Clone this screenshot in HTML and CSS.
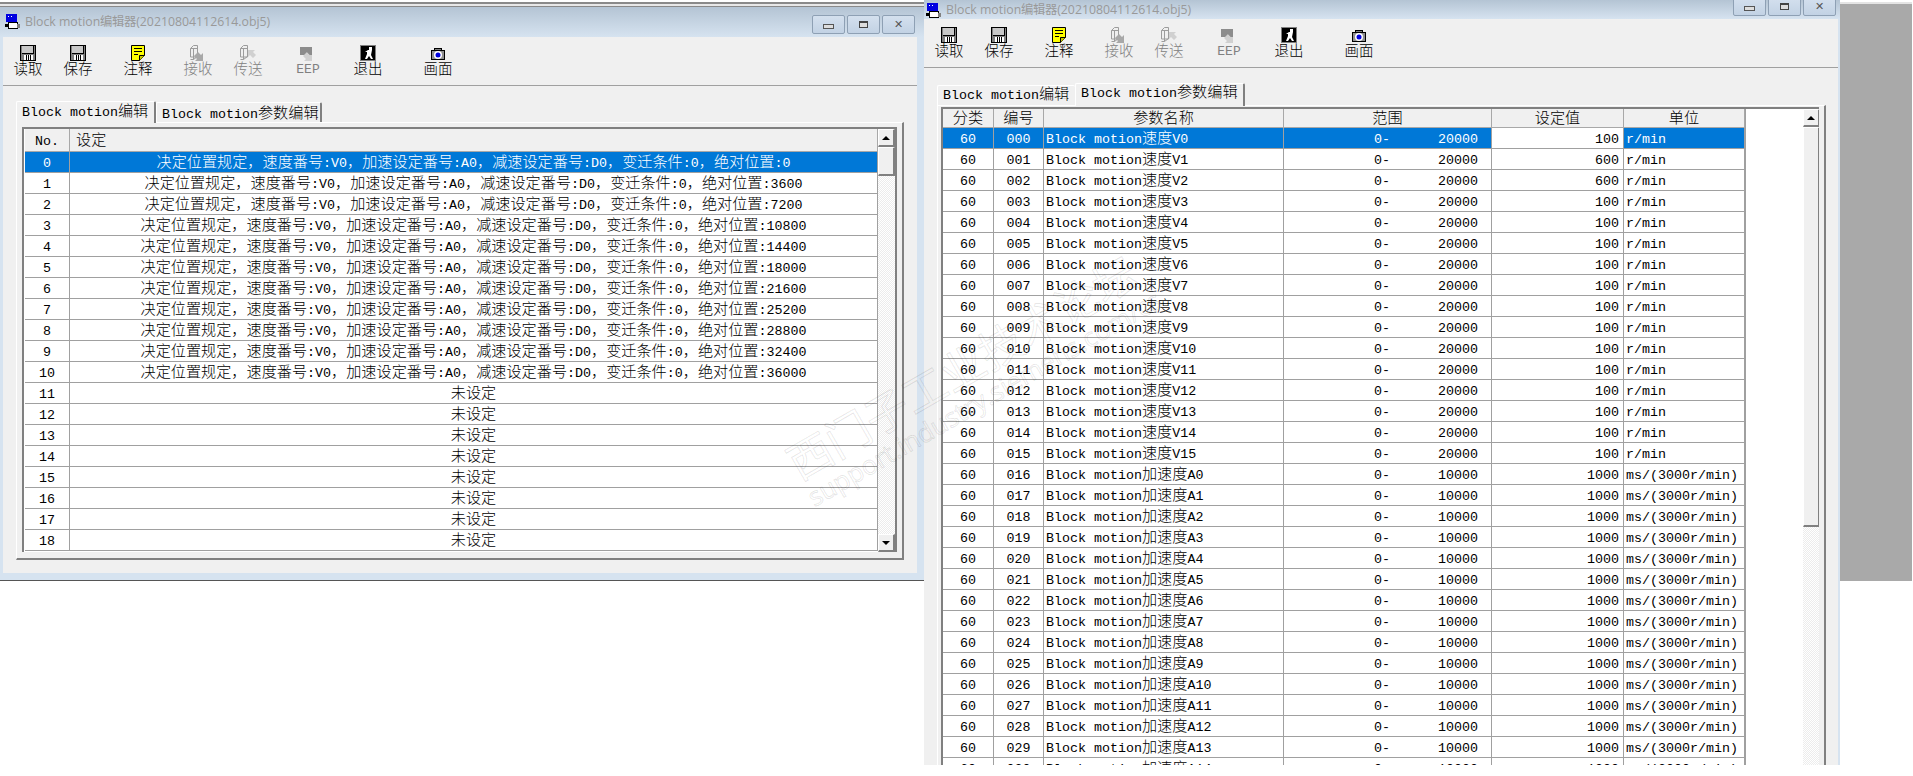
FILE: index.html
```html
<!DOCTYPE html>
<html lang="zh-CN">
<head>
    <meta charset="UTF-8">
    <title>Block motion编辑器</title>
    <link rel="stylesheet" href="styles.css">
</head>
<body>
    <svg class="icon-defs" width="0" height="0">
        <symbol id="i-app" viewBox="0 0 16 16">
            <rect x="1" y="0" width="11" height="8" fill="#0000e0"/>
            <rect x="3" y="2" width="1" height="1" fill="#fff"/>
            <rect x="6" y="2" width="1" height="1" fill="#fff"/>
            <rect x="3.500" y="8.500" width="9" height="6" fill="#fff" stroke="#000"/>
            <rect x="0" y="10" width="4" height="3" fill="#000"/>
            <rect x="12" y="10" width="3" height="4" fill="#808080"/>
        </symbol>
        <symbol id="i-disk" viewBox="0 0 16 16">
            <rect x="0.500" y="0.500" width="15" height="15" fill="#808080" stroke="#000"/>
            <rect x="2" y="1" width="12" height="7" fill="#c8c8c8"/>
            <path d="M2 8.500h12M13.500 1v7" stroke="#000"/>
            <rect x="4" y="10" width="9" height="5" fill="#fff"/>
            <path d="M6.500 10v5M8.500 10v5M10.500 10v5" stroke="#000"/>
        </symbol>
        <symbol id="i-note" viewBox="0 0 14 16">
            <path d="M0.500 0.500h13v10l-5 5h-8z" fill="#ff0" stroke="#000"/>
            <path d="M8.500 15.500v-5h5" fill="#c8c800" stroke="#000"/>
            <path d="M3 3.500h8M3 6.500h8M3 9.500h4" stroke="#000"/>
        </symbol>
        <symbol id="i-recv" viewBox="0 0 16 16">
            <path d="M0.500 3.500l3-3h4v11.500h-7z" fill="#efefef" stroke="#9c9c9c"/>
            <path d="M0.500 3.500h7M3.500 3.500v11M0.500 14.500h3l4-3" fill="none" stroke="#9c9c9c"/>
            <path d="M8 7l3 3 2-2v8h-8l2-2-3-3z" fill="#a8a8a8"/>
        </symbol>
        <symbol id="i-send" viewBox="0 0 16 16">
            <path d="M0.500 3.500l3-3h4v11.500h-7z" fill="#efefef" stroke="#9c9c9c"/>
            <path d="M0.500 3.500h7M3.500 3.500v11M0.500 14.500h3l4-3" fill="none" stroke="#9c9c9c"/>
            <path d="M8 5h7l-2 2 3 3-3 3-3-3-2 2z" fill="#d0d0d0"/>
        </symbol>
        <symbol id="i-eep" viewBox="0 0 16 16">
            <rect x="0" y="2" width="12" height="8" fill="#8c8c8c"/>
            <path d="M7 7l3 3 2-2v8h-8l2-2-3-3z" fill="#d0d0d0"/>
            <path d="M6 6h6v4h-2z" fill="#8c8c8c"/>
        </symbol>
        <symbol id="i-exit" viewBox="0 0 16 16">
            <rect x="0.500" y="0.500" width="15" height="15" fill="#000" stroke="#808080"/>
            <rect x="9" y="2" width="3" height="3" fill="#fff"/>
            <path d="M5 7l3-2h4l-1 5 2 4h-2l-2-3-2 3H5l2-5V7z" fill="#fff"/>
        </symbol>
        <symbol id="i-cam" viewBox="0 0 16 16">
            <rect x="4.500" y="3.500" width="7" height="2" fill="#808080" stroke="#000"/>
            <rect x="1.500" y="5.500" width="13" height="9" fill="#909090" stroke="#000"/>
            <circle cx="8" cy="10" r="4" fill="#fff"/>
            <circle cx="8" cy="10" r="2.500" fill="#0000e0"/>
        </symbol>
    </svg>

    <div class="desktop-block"></div>

    <!-- left window -->
    <section class="window win-a">
        <header class="titlebar">
            <svg class="app-icon"><use href="#i-app"/></svg>
            <span class="title">Block motion编辑器(20210804112614.obj5)</span>
            <div class="win-btns">
                <span class="win-btn"><i class="g-min"></i></span>
                <span class="win-btn"><i class="g-max"></i></span>
                <span class="win-btn g-close">✕</span>
            </div>
        </header>
        <div class="client">
            <div class="toolbar">
                <div class="tool"><svg class="ico"><use href="#i-disk"/></svg><span>读取</span></div>
                <div class="tool"><svg class="ico"><use href="#i-disk"/></svg><span>保存</span></div>
                <div class="tool gap"><svg class="ico"><use href="#i-note"/></svg><span>注释</span></div>
                <div class="tool gap off"><svg class="ico"><use href="#i-recv"/></svg><span>接收</span></div>
                <div class="tool off"><svg class="ico"><use href="#i-send"/></svg><span>传送</span></div>
                <div class="tool gap off"><svg class="ico"><use href="#i-eep"/></svg><span class="lat">EEP</span></div>
                <div class="tool gap"><svg class="ico"><use href="#i-exit"/></svg><span>退出</span></div>
                <div class="tool gap"><svg class="ico"><use href="#i-cam"/></svg><span>画面</span></div>
            </div>
            <div class="tabs">
                <div class="tab active">Block motion<span class="zh">编辑</span></div>
                <div class="tab">Block motion<span class="zh">参数编辑</span></div>
            </div>
            <div class="panel">
                <div class="grid">
                    <table class="sheet">
                        <colgroup><col class="c-no"><col class="c-set"></colgroup>
                        <thead>
                            <tr><th>No.</th><th class="left"><span class="zh">设定</span></th></tr>
                        </thead>
                        <tbody>
                            <tr class="sel"><td>0</td><td><span class="zh">决定位置规定，速度番号</span>:V0<span class="zh">，加速设定番号</span>:A0<span class="zh">，减速设定番号</span>:D0<span class="zh">，变迁条件</span>:0<span class="zh">，绝对位置</span>:0</td></tr>
                            <tr><td>1</td><td><span class="zh">决定位置规定，速度番号</span>:V0<span class="zh">，加速设定番号</span>:A0<span class="zh">，减速设定番号</span>:D0<span class="zh">，变迁条件</span>:0<span class="zh">，绝对位置</span>:3600</td></tr>
                            <tr><td>2</td><td><span class="zh">决定位置规定，速度番号</span>:V0<span class="zh">，加速设定番号</span>:A0<span class="zh">，减速设定番号</span>:D0<span class="zh">，变迁条件</span>:0<span class="zh">，绝对位置</span>:7200</td></tr>
                            <tr><td>3</td><td><span class="zh">决定位置规定，速度番号</span>:V0<span class="zh">，加速设定番号</span>:A0<span class="zh">，减速设定番号</span>:D0<span class="zh">，变迁条件</span>:0<span class="zh">，绝对位置</span>:10800</td></tr>
                            <tr><td>4</td><td><span class="zh">决定位置规定，速度番号</span>:V0<span class="zh">，加速设定番号</span>:A0<span class="zh">，减速设定番号</span>:D0<span class="zh">，变迁条件</span>:0<span class="zh">，绝对位置</span>:14400</td></tr>
                            <tr><td>5</td><td><span class="zh">决定位置规定，速度番号</span>:V0<span class="zh">，加速设定番号</span>:A0<span class="zh">，减速设定番号</span>:D0<span class="zh">，变迁条件</span>:0<span class="zh">，绝对位置</span>:18000</td></tr>
                            <tr><td>6</td><td><span class="zh">决定位置规定，速度番号</span>:V0<span class="zh">，加速设定番号</span>:A0<span class="zh">，减速设定番号</span>:D0<span class="zh">，变迁条件</span>:0<span class="zh">，绝对位置</span>:21600</td></tr>
                            <tr><td>7</td><td><span class="zh">决定位置规定，速度番号</span>:V0<span class="zh">，加速设定番号</span>:A0<span class="zh">，减速设定番号</span>:D0<span class="zh">，变迁条件</span>:0<span class="zh">，绝对位置</span>:25200</td></tr>
                            <tr><td>8</td><td><span class="zh">决定位置规定，速度番号</span>:V0<span class="zh">，加速设定番号</span>:A0<span class="zh">，减速设定番号</span>:D0<span class="zh">，变迁条件</span>:0<span class="zh">，绝对位置</span>:28800</td></tr>
                            <tr><td>9</td><td><span class="zh">决定位置规定，速度番号</span>:V0<span class="zh">，加速设定番号</span>:A0<span class="zh">，减速设定番号</span>:D0<span class="zh">，变迁条件</span>:0<span class="zh">，绝对位置</span>:32400</td></tr>
                            <tr><td>10</td><td><span class="zh">决定位置规定，速度番号</span>:V0<span class="zh">，加速设定番号</span>:A0<span class="zh">，减速设定番号</span>:D0<span class="zh">，变迁条件</span>:0<span class="zh">，绝对位置</span>:36000</td></tr>
                            <tr><td>11</td><td><span class="zh">未设定</span></td></tr>
                            <tr><td>12</td><td><span class="zh">未设定</span></td></tr>
                            <tr><td>13</td><td><span class="zh">未设定</span></td></tr>
                            <tr><td>14</td><td><span class="zh">未设定</span></td></tr>
                            <tr><td>15</td><td><span class="zh">未设定</span></td></tr>
                            <tr><td>16</td><td><span class="zh">未设定</span></td></tr>
                            <tr><td>17</td><td><span class="zh">未设定</span></td></tr>
                            <tr><td>18</td><td><span class="zh">未设定</span></td></tr>
                        </tbody>
                    </table>
                    <div class="scrollbar">
                        <div class="sb-btn"><i class="arrow-up"></i></div>
                        <div class="sb-thumb"></div>
                        <div class="sb-track"></div>
                        <div class="sb-btn"><i class="arrow-down"></i></div>
                    </div>
                </div>
            </div>
        </div>
    </section>

    <!-- right window -->
    <section class="window win-b">
        <header class="titlebar">
            <svg class="app-icon"><use href="#i-app"/></svg>
            <span class="title">Block motion编辑器(20210804112614.obj5)</span>
            <div class="win-btns">
                <span class="win-btn"><i class="g-min"></i></span>
                <span class="win-btn"><i class="g-max"></i></span>
                <span class="win-btn g-close">✕</span>
            </div>
        </header>
        <div class="client">
            <div class="toolbar">
                <div class="tool"><svg class="ico"><use href="#i-disk"/></svg><span>读取</span></div>
                <div class="tool"><svg class="ico"><use href="#i-disk"/></svg><span>保存</span></div>
                <div class="tool gap"><svg class="ico"><use href="#i-note"/></svg><span>注释</span></div>
                <div class="tool gap off"><svg class="ico"><use href="#i-recv"/></svg><span>接收</span></div>
                <div class="tool off"><svg class="ico"><use href="#i-send"/></svg><span>传送</span></div>
                <div class="tool gap off"><svg class="ico"><use href="#i-eep"/></svg><span class="lat">EEP</span></div>
                <div class="tool gap"><svg class="ico"><use href="#i-exit"/></svg><span>退出</span></div>
                <div class="tool gap"><svg class="ico"><use href="#i-cam"/></svg><span>画面</span></div>
            </div>
            <div class="tabs">
                <div class="tab">Block motion<span class="zh">编辑</span></div>
                <div class="tab active">Block motion<span class="zh">参数编辑</span></div>
            </div>
            <div class="panel">
                <div class="grid">
                    <table class="sheet">
                        <colgroup><col class="c-cat"><col class="c-num"><col class="c-name"><col class="c-from"><col class="c-to"><col class="c-val"><col class="c-unit"></colgroup>
                        <thead>
                            <tr><th><span class="zh">分类</span></th><th><span class="zh">编号</span></th><th><span class="zh">参数名称</span></th><th colspan="2"><span class="zh">范围</span></th><th><span class="zh">设定值</span></th><th><span class="zh">单位</span></th></tr>
                        </thead>
                        <tbody>
                            <tr class="sel"><td>60</td><td>000</td><td class="name">Block motion<span class="zh">速度</span>V0</td><td class="from">0-</td><td class="to">20000</td><td class="val">100</td><td class="unit">r/min</td></tr>
                            <tr><td>60</td><td>001</td><td class="name">Block motion<span class="zh">速度</span>V1</td><td class="from">0-</td><td class="to">20000</td><td class="val">600</td><td class="unit">r/min</td></tr>
                            <tr><td>60</td><td>002</td><td class="name">Block motion<span class="zh">速度</span>V2</td><td class="from">0-</td><td class="to">20000</td><td class="val">600</td><td class="unit">r/min</td></tr>
                            <tr><td>60</td><td>003</td><td class="name">Block motion<span class="zh">速度</span>V3</td><td class="from">0-</td><td class="to">20000</td><td class="val">100</td><td class="unit">r/min</td></tr>
                            <tr><td>60</td><td>004</td><td class="name">Block motion<span class="zh">速度</span>V4</td><td class="from">0-</td><td class="to">20000</td><td class="val">100</td><td class="unit">r/min</td></tr>
                            <tr><td>60</td><td>005</td><td class="name">Block motion<span class="zh">速度</span>V5</td><td class="from">0-</td><td class="to">20000</td><td class="val">100</td><td class="unit">r/min</td></tr>
                            <tr><td>60</td><td>006</td><td class="name">Block motion<span class="zh">速度</span>V6</td><td class="from">0-</td><td class="to">20000</td><td class="val">100</td><td class="unit">r/min</td></tr>
                            <tr><td>60</td><td>007</td><td class="name">Block motion<span class="zh">速度</span>V7</td><td class="from">0-</td><td class="to">20000</td><td class="val">100</td><td class="unit">r/min</td></tr>
                            <tr><td>60</td><td>008</td><td class="name">Block motion<span class="zh">速度</span>V8</td><td class="from">0-</td><td class="to">20000</td><td class="val">100</td><td class="unit">r/min</td></tr>
                            <tr><td>60</td><td>009</td><td class="name">Block motion<span class="zh">速度</span>V9</td><td class="from">0-</td><td class="to">20000</td><td class="val">100</td><td class="unit">r/min</td></tr>
                            <tr><td>60</td><td>010</td><td class="name">Block motion<span class="zh">速度</span>V10</td><td class="from">0-</td><td class="to">20000</td><td class="val">100</td><td class="unit">r/min</td></tr>
                            <tr><td>60</td><td>011</td><td class="name">Block motion<span class="zh">速度</span>V11</td><td class="from">0-</td><td class="to">20000</td><td class="val">100</td><td class="unit">r/min</td></tr>
                            <tr><td>60</td><td>012</td><td class="name">Block motion<span class="zh">速度</span>V12</td><td class="from">0-</td><td class="to">20000</td><td class="val">100</td><td class="unit">r/min</td></tr>
                            <tr><td>60</td><td>013</td><td class="name">Block motion<span class="zh">速度</span>V13</td><td class="from">0-</td><td class="to">20000</td><td class="val">100</td><td class="unit">r/min</td></tr>
                            <tr><td>60</td><td>014</td><td class="name">Block motion<span class="zh">速度</span>V14</td><td class="from">0-</td><td class="to">20000</td><td class="val">100</td><td class="unit">r/min</td></tr>
                            <tr><td>60</td><td>015</td><td class="name">Block motion<span class="zh">速度</span>V15</td><td class="from">0-</td><td class="to">20000</td><td class="val">100</td><td class="unit">r/min</td></tr>
                            <tr><td>60</td><td>016</td><td class="name">Block motion<span class="zh">加速度</span>A0</td><td class="from">0-</td><td class="to">10000</td><td class="val">1000</td><td class="unit">ms/(3000r/min)</td></tr>
                            <tr><td>60</td><td>017</td><td class="name">Block motion<span class="zh">加速度</span>A1</td><td class="from">0-</td><td class="to">10000</td><td class="val">1000</td><td class="unit">ms/(3000r/min)</td></tr>
                            <tr><td>60</td><td>018</td><td class="name">Block motion<span class="zh">加速度</span>A2</td><td class="from">0-</td><td class="to">10000</td><td class="val">1000</td><td class="unit">ms/(3000r/min)</td></tr>
                            <tr><td>60</td><td>019</td><td class="name">Block motion<span class="zh">加速度</span>A3</td><td class="from">0-</td><td class="to">10000</td><td class="val">1000</td><td class="unit">ms/(3000r/min)</td></tr>
                            <tr><td>60</td><td>020</td><td class="name">Block motion<span class="zh">加速度</span>A4</td><td class="from">0-</td><td class="to">10000</td><td class="val">1000</td><td class="unit">ms/(3000r/min)</td></tr>
                            <tr><td>60</td><td>021</td><td class="name">Block motion<span class="zh">加速度</span>A5</td><td class="from">0-</td><td class="to">10000</td><td class="val">1000</td><td class="unit">ms/(3000r/min)</td></tr>
                            <tr><td>60</td><td>022</td><td class="name">Block motion<span class="zh">加速度</span>A6</td><td class="from">0-</td><td class="to">10000</td><td class="val">1000</td><td class="unit">ms/(3000r/min)</td></tr>
                            <tr><td>60</td><td>023</td><td class="name">Block motion<span class="zh">加速度</span>A7</td><td class="from">0-</td><td class="to">10000</td><td class="val">1000</td><td class="unit">ms/(3000r/min)</td></tr>
                            <tr><td>60</td><td>024</td><td class="name">Block motion<span class="zh">加速度</span>A8</td><td class="from">0-</td><td class="to">10000</td><td class="val">1000</td><td class="unit">ms/(3000r/min)</td></tr>
                            <tr><td>60</td><td>025</td><td class="name">Block motion<span class="zh">加速度</span>A9</td><td class="from">0-</td><td class="to">10000</td><td class="val">1000</td><td class="unit">ms/(3000r/min)</td></tr>
                            <tr><td>60</td><td>026</td><td class="name">Block motion<span class="zh">加速度</span>A10</td><td class="from">0-</td><td class="to">10000</td><td class="val">1000</td><td class="unit">ms/(3000r/min)</td></tr>
                            <tr><td>60</td><td>027</td><td class="name">Block motion<span class="zh">加速度</span>A11</td><td class="from">0-</td><td class="to">10000</td><td class="val">1000</td><td class="unit">ms/(3000r/min)</td></tr>
                            <tr><td>60</td><td>028</td><td class="name">Block motion<span class="zh">加速度</span>A12</td><td class="from">0-</td><td class="to">10000</td><td class="val">1000</td><td class="unit">ms/(3000r/min)</td></tr>
                            <tr><td>60</td><td>029</td><td class="name">Block motion<span class="zh">加速度</span>A13</td><td class="from">0-</td><td class="to">10000</td><td class="val">1000</td><td class="unit">ms/(3000r/min)</td></tr>
                            <tr><td>60</td><td>030</td><td class="name">Block motion<span class="zh">加速度</span>A14</td><td class="from">0-</td><td class="to">10000</td><td class="val">1000</td><td class="unit">ms/(3000r/min)</td></tr>
                        </tbody>
                    </table>
                    <div class="scrollbar">
                        <div class="sb-btn"><i class="arrow-up"></i></div>
                        <div class="sb-thumb"></div>
                        <div class="sb-track"></div>
                    </div>
                </div>
            </div>
        </div>
    </section>

    <div class="watermark">
        <div class="wm-cn">西门子工业技术论坛</div>
        <div class="wm-en">support.industry.siemens.com/cs</div>
    </div>
</body>
</html>
```

FILE: styles.css
```css
body {
    margin: 0;
    width: 1913px;
    height: 776px;
    overflow: hidden;
    position: relative;
    background-color: white;
    font-family: "Liberation Mono", "Noto Sans CJK SC", monospace;
    font-size: 13.33px;
    color: #000;
}

.icon-defs {
    position: absolute;
}

.zh {
    font-family: "Noto Sans CJK SC", sans-serif;
    font-size: 15.150px;
    font-weight: 300;
    line-height: 0;
}

/* windows sit on a free desktop */
.window {
    position: absolute;
    top: 0;
    background-color: #d6e3f0;
    overflow: hidden;
}

.win-a {
    left: 0;
    width: 924px;
    height: 581px;
    padding-top: 7px;
    box-sizing: border-box;
    border-bottom: 1px solid #555;
}

.win-a::before {
    content: "";
    position: absolute;
    top: 0;
    left: 0;
    right: 0;
    height: 7px;
    background: linear-gradient(#fff 2px, #8a8a8a 2px, #8a8a8a 4px, #e8e8e8 4px, #e8e8e8 6px, #8a8a8a 6px);
}

.win-b {
    left: 924px;
    width: 916px;
    height: 765px;
}

.desktop-block {
    position: absolute;
    left: 1839px;
    top: 2px;
    width: 73px;
    height: 579px;
    box-sizing: border-box;
    background-color: #a9a9a9;
    border-top: 2px solid #e4e4e4;
}

.titlebar {
    display: flex;
    align-items: center;
    background: linear-gradient(#b4c4d4, #d6e3f0);
}

.win-a .titlebar {
    height: 30px;
    padding: 0 9px 0 5px;
}

.win-b .titlebar {
    height: 19px;
    padding: 0 4px 0 2px;
    align-items: flex-end;
}

.app-icon {
    width: 16px;
    height: 16px;
    flex: none;
}

.title {
    margin-left: 4px;
    font-family: "Open Sans", sans-serif;
    font-size: 12.300px;
    line-height: 20px;
    color: #999;
    white-space: nowrap;
}

.win-b .title {
    margin-bottom: -1px;
}

.win-btns {
    margin-left: auto;
    display: flex;
    gap: 2px;
}

.win-a .win-btns {
    margin-top: 4px;
}

.win-b .win-btns {
    align-self: flex-start;
    margin-top: -3px;
}

.win-btn {
    width: 31px;
    height: 17px;
    display: flex;
    align-items: center;
    justify-content: center;
    background: linear-gradient(#d4e0ee, #c2d2e4);
    border: 1px solid #8ea0b4;
    border-radius: 2px;
    font-family: "DejaVu Sans", sans-serif;
    font-size: 11px;
    font-weight: bold;
    color: #555;
}

.g-min {
    width: 9px;
    height: 3px;
    margin-top: 4px;
    background-color: #ddd;
    border: 1px solid #555;
}

.g-max {
    width: 7px;
    height: 4px;
    background-color: #ddd;
    border: 1px solid #444;
    border-top-width: 2px;
}

.client {
    background-color: #f0f0f0;
}

.win-a .client {
    margin: 0 7px 0 3px;
    height: 536px;
}

.win-b .client {
    margin-right: 2px;
    height: 746px;
}

.toolbar {
    display: flex;
    height: 40px;
    padding-top: 8px;
    border-bottom: 1px solid #a0a0a0;
}

.tool {
    width: 50px;
    display: flex;
    flex-direction: column;
    align-items: center;
}

.tool.gap {
    margin-left: 10px;
}

.tool:last-child {
    margin-left: 20px;
}

.tool span {
    display: block;
    margin-top: -1px;
    font-family: "Noto Sans CJK SC", sans-serif;
    font-size: 14.500px;
    font-weight: 300;
    line-height: 15px;
}

.tool span.lat {
    margin-top: 1px;
    font-family: "Liberation Mono", monospace;
    font-size: 13px;
}

.tool.off span {
    color: #808080;
}

.ico {
    width: 16px;
    height: 16px;
    flex: none;
}

.tabs {
    display: flex;
    align-items: flex-end;
    padding-top: 16px;
    margin-left: 13px;
    height: 21px;
}

.win-a .tabs {
    padding-top: 15px;
}

.tab {
    height: 19px;
    line-height: 19px;
    padding-left: 5px;
    background-color: #f0f0f0;
    border-top: 1px solid #fff;
    border-left: 1px solid #fff;
    border-right: 2px solid #808080;
    border-radius: 2px 2px 0 0;
    white-space: nowrap;
}

.win-a .tab {
    line-height: 23px;
}

.tab.active, .win-a .tab.active {
    height: 21px;
    line-height: 21px;
    margin-bottom: -1px;
    position: relative;
    z-index: 1;
}

.win-b .tab.active {
    height: 22px;
    line-height: 19px;
}

.win-a .tab:first-child { width: 132px; }
.win-a .tab:last-child { width: 158px; }
.win-b .tab:first-child { width: 132px; border-right: 0; }
.win-b .tab:last-child { width: 162px; }

.panel {
    box-sizing: border-box;
    margin-left: 13px;
    background-color: #f0f0f0;
    border-top: 1px solid #fff;
    border-left: 1px solid #fff;
    border-right: 2px solid #808080;
}

.win-a .panel {
    width: 888px;
    height: 438px;
    padding: 4px 0 0 5px;
    border-bottom: 2px solid #808080;
}

.win-b .panel {
    width: 889px;
    height: 660px;
    padding: 1px 0 0 3px;
}

.grid {
    display: flex;
    box-sizing: border-box;
    background-color: white;
    border-top: 2px solid #808080;
    border-left: 2px solid #808080;
    overflow: hidden;
}

.win-a .grid {
    width: 875px;
    height: 425px;
    border-right: 2px solid #808080;
    padding-left: 1px;
}

.win-b .grid {
    width: 878px;
    height: 658px;
}

.sheet {
    table-layout: fixed;
    border-collapse: separate;
    border-spacing: 0;
    flex: none;
    align-self: flex-start;
}

.win-a .sheet { width: 853px; }
.win-b .sheet { width: 802px; }

.c-no { width: 45px; }
.c-set { width: 808px; }
.c-cat { width: 51px; }
.c-num { width: 50px; }
.c-name { width: 240px; }
.c-from { width: 106px; }
.c-to { width: 102px; }
.c-val { width: 132px; }
.c-unit { width: 121px; }

th {
    padding: 0;
    background-color: #f0f0f0;
    border-right: 1px solid #a8a8a8;
    border-bottom: 1px solid #a8a8a8;
    font-weight: normal;
    text-align: center;
}

.win-a th {
    height: 19px;
    padding-top: 3px;
}

.win-b th {
    height: 14px;
    line-height: 14px;
    padding-top: 4px;
}

.win-a th.left {
    text-align: left;
    padding-left: 6px;
}

td {
    height: 16px;
    line-height: 16px;
    padding: 4px 0 0;
    background-color: white;
    border-right: 1px solid #a0a0a0;
    border-bottom: 1px solid #a0a0a0;
    text-align: center;
    white-space: nowrap;
}

.sel td {
    background-color: #0078d7;
    color: white;
}

.sel td.val {
    background-color: white;
    color: #000;
}

td.name {
    text-align: left;
    padding-left: 2px;
}

td.from {
    text-align: right;
    border-right: 0;
}

td.to {
    text-align: right;
    padding-right: 13px;
}

td.val {
    text-align: right;
    padding-right: 4px;
}

td.unit {
    text-align: left;
    padding-left: 2px;
}

.win-b .sheet {
    border-right: 1px solid #a0a0a0;
}

.scrollbar {
    display: flex;
    flex-direction: column;
    flex: none;
    width: 17px;
    height: 100%;
}

.win-b .scrollbar {
    margin-left: 57px;
}

.sb-btn {
    flex: none;
    height: 15px;
    display: flex;
    align-items: center;
    justify-content: center;
    background-color: #f0f0f0;
    border: 1px solid #fff;
    border-right: 2px solid #808080;
    border-bottom: 2px solid #808080;
}

.sb-thumb {
    flex: none;
    background-color: #f0f0f0;
    border: 1px solid #fff;
    border-right: 2px solid #808080;
    border-bottom: 2px solid #808080;
}

.win-a .sb-thumb { height: 26px; }
.win-b .sb-thumb { height: 397px; }

.sb-track {
    flex: 1;
    background: repeating-conic-gradient(#ececec 0 25%, #fff 0 50%) 0 0 / 2px 2px;
}

.arrow-up, .arrow-down {
    width: 0;
    height: 0;
    border-left: 4px solid transparent;
    border-right: 4px solid transparent;
}

.arrow-up {
    border-bottom: 4px solid #000;
}

.arrow-down {
    border-top: 4px solid #000;
}

.watermark {
    position: absolute;
    left: 778px;
    top: 444px;
    transform: rotate(-30deg);
    transform-origin: left top;
    color: transparent;
    -webkit-text-stroke: 1px rgba(0, 0, 0, 0.1);
    font-family: "Noto Sans CJK SC", sans-serif;
    white-space: nowrap;
    pointer-events: none;
}

.wm-cn {
    font-size: 44px;
    line-height: 48px;
}

.wm-en {
    font-family: "Open Sans", sans-serif;
    font-size: 26px;
    line-height: 30px;
}
```
